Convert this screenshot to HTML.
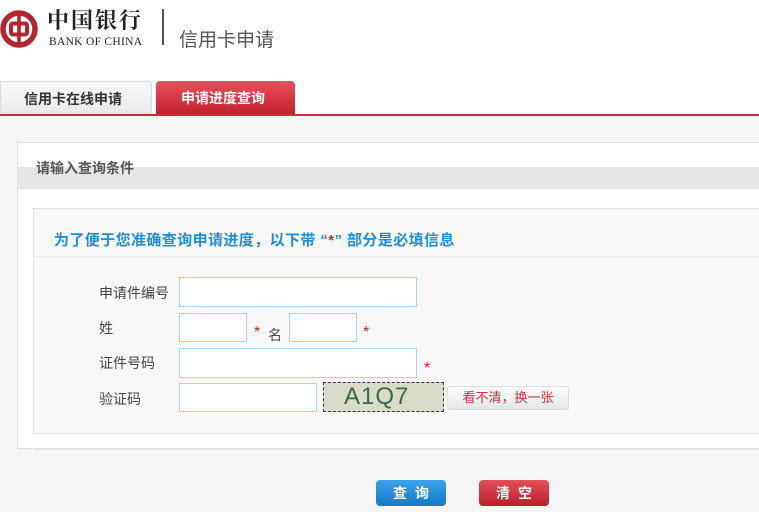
<!DOCTYPE html>
<html><head><meta charset="utf-8"><style>
*{margin:0;padding:0;box-sizing:border-box}
body{width:759px;height:512px;overflow:hidden;background:#fff;font-family:"Liberation Sans","Noto Sans CJK SC",sans-serif;position:relative;font-size:14px;color:#333}
.a{position:absolute}
.inp{position:absolute;border:1px solid #a9d6ee;background:#fff}
.star{position:absolute;color:#d8222a;font-size:16px}
.lbl{position:absolute;font-size:14px;color:#444}
</style></head><body>
<svg class="a" style="left:0;top:10px" width="40" height="40" viewBox="0 0 40 40">
<circle cx="19" cy="19" r="16" fill="none" stroke="#b3262d" stroke-width="5.5"/>
<rect x="11" y="13.5" width="16" height="11" rx="2" fill="none" stroke="#b3262d" stroke-width="4"/>
<rect x="17.2" y="3" width="3.6" height="32" fill="#b3262d"/></svg>
<div class="a" style="left:47px;top:7px;font-size:22px;font-family:'Noto Serif CJK SC',serif;font-weight:bold;color:#222;letter-spacing:2px;line-height:26px">中国银行</div>
<div class="a" style="left:49px;top:36px;font-size:11.5px;font-family:'Liberation Serif',serif;color:#222;letter-spacing:0.3px">BANK OF CHINA</div>
<div class="a" style="left:162px;top:9px;width:2px;height:36px;background:#555"></div>
<div class="a" style="left:179px;top:25px;font-size:19px;color:#555">信用卡申请</div>
<div class="a" style="left:0;top:81px;width:152px;height:34px;background:linear-gradient(#fafafa,#e8e8e8);border:1px solid #ddd;border-bottom:none;border-radius:0 4px 0 0;font-weight:bold;font-size:14px;color:#333;padding:7px 0 0 23px">信用卡在线申请</div>
<div class="a" style="left:156px;top:81px;width:139px;height:34px;background:linear-gradient(#e8525d,#c11f2c);border-radius:4px 4px 0 0;font-weight:bold;font-size:14px;color:#fff;padding:7px 0 0 25px">申请进度查询</div>
<div class="a" style="left:0;top:114px;width:759px;height:2px;background:#d12b38"></div>
<div class="a" style="left:0;top:116px;width:759px;height:396px;background:#f6f6f6"></div>
<div class="a" style="left:17px;top:142px;width:750px;height:307px;background:#fff;border:1px solid #e2e2e2"></div>
<div class="a" style="left:18px;top:167px;width:741px;height:22px;background:#e6e6e6"></div>
<div class="a" style="left:36px;top:158px;font-size:14px;font-weight:bold;color:#555">请输入查询条件</div>
<div class="a" style="left:33px;top:208px;width:730px;height:226px;background:#f9f9f9;border:1px solid #e4e4e4"></div>
<div class="a" style="left:54px;top:229px;font-size:15px;font-weight:bold;color:#1e8ed6;letter-spacing:0.4px">为了便于您准确查询申请进度，以下带 “<span style="color:#d8222a">*</span>” 部分是必填信息</div>
<div class="a" style="left:34px;top:256px;width:725px;height:1px;background:#eee"></div>
<div class="lbl" style="left:99px;top:283px">申请件编号</div>
<div class="inp" style="left:179px;top:277px;width:238px;height:30px"></div>
<div class="lbl" style="left:99px;top:318px">姓</div>
<div class="inp" style="left:179px;top:313px;width:68px;height:29px"></div>
<div class="star" style="left:254px;top:324px">*</div>
<div class="lbl" style="left:268px;top:325px">名</div>
<div class="inp" style="left:289px;top:313px;width:68px;height:29px"></div>
<div class="star" style="left:363px;top:324px">*</div>
<div class="lbl" style="left:99px;top:353px">证件号码</div>
<div class="inp" style="left:179px;top:348px;width:238px;height:30px"></div>
<div class="star" style="left:424px;top:360px">*</div>
<div class="lbl" style="left:99px;top:389px">验证码</div>
<div class="inp" style="left:179px;top:383px;width:138px;height:29px"></div>
<div class="a" style="left:323px;top:382px;width:121px;height:30px;background:#d9dccb;border:1px dashed #333;font-size:24px;color:#3d6b3a;padding:0 0 0 20px;line-height:28px;letter-spacing:1px">A1Q7</div>
<div class="a" style="left:447px;top:386px;width:122px;height:24px;background:linear-gradient(#fdfdfd,#e6e6e6);border:1px solid #ddd;border-radius:3px;color:#c8333e;font-size:13px;text-align:center;line-height:22px">看不清，换一张</div>
<div class="a" style="left:34px;top:449px;width:725px;height:1px;background:#ddd"></div>
<div class="a" style="left:376px;top:480px;width:70px;height:26px;background:linear-gradient(#3aa4ec,#1479c9);border-radius:4px;color:#fff;font-weight:bold;text-align:center;line-height:26px;letter-spacing:8px;padding-left:8px">查询</div>
<div class="a" style="left:479px;top:480px;width:70px;height:26px;background:linear-gradient(#e4515b,#b71e2a);border-radius:4px;color:#fff;font-weight:bold;text-align:center;line-height:26px;letter-spacing:8px;padding-left:8px">清空</div>
</body></html>
